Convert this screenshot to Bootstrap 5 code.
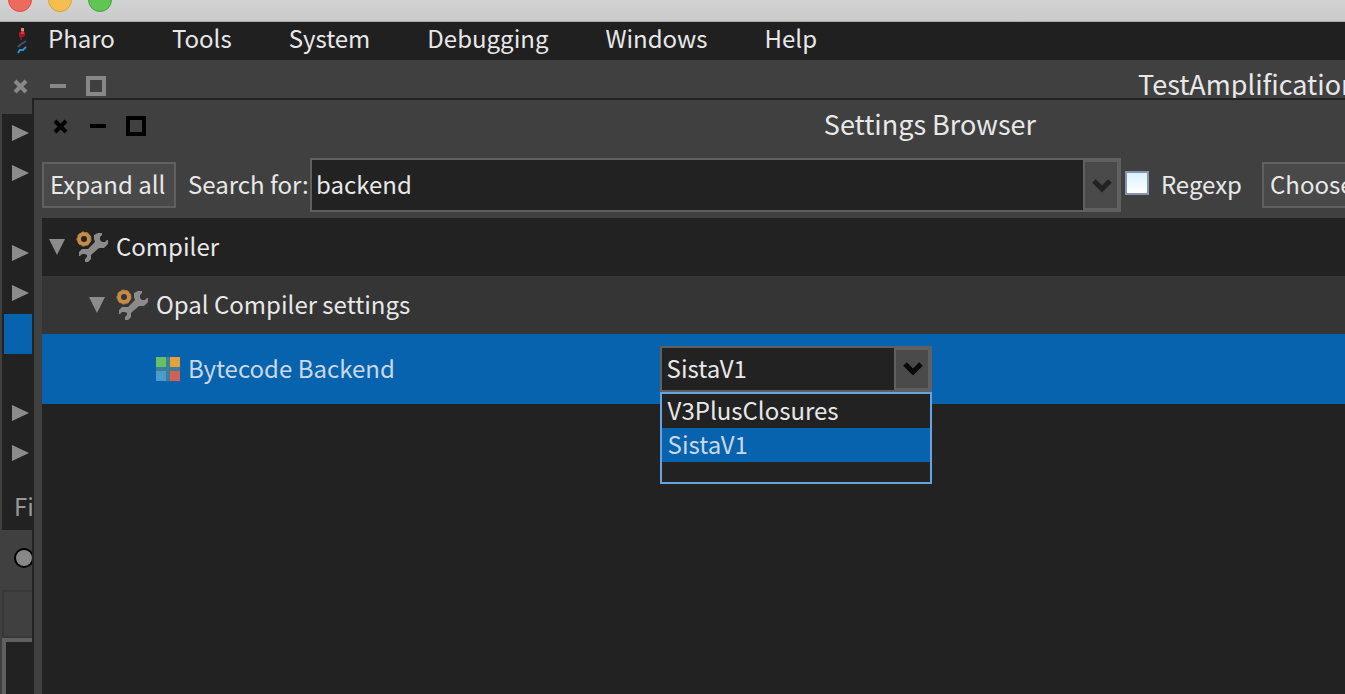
<!DOCTYPE html>
<html lang="en">
<head>
<meta charset="utf-8">
<meta name="viewport" content="width=device-width, initial-scale=1">
<title>Pharo - Settings Browser</title>
<link href="https://cdn.jsdelivr.net/npm/bootstrap@5.3.0/dist/css/bootstrap.min.css" rel="stylesheet">
<style>
  :root { --ink:#e8e8e8; --base:#404040; --dark:#222; --edge:#606060; --pick:#0763ae; }
  body { font-family:"Noto Sans CJK SC","Source Sans Pro",sans-serif; font-size:24px; line-height:36px; color:var(--ink); background:var(--base); overflow:hidden; }
  button, input, select { color:var(--ink); font:inherit; border-radius:0; }
  svg { display:block; flex:none; }
  .mac-bar { height:22px; background:linear-gradient(#d3d3d3,#cacaca); border-bottom:1px solid #aaa; padding-left:8px; gap:16px; }
  .light { width:24px; height:24px; border-radius:50%; border:1px solid; margin-top:-12px; }
  .light.close-dot { background:#ee6a5f; border-color:#d8504a; }
  .light.min-dot { background:#f5bf4f; border-color:#dba039; }
  .light.max-dot { background:#61c554; border-color:#42a63a; }
  .main-menu { height:38px; background:#202020; padding:0 0 6px 16px; gap:57px; }
  .main-menu a { color:var(--ink); text-decoration:none; }
  .first-item { gap:20px; }
  .first-item svg { margin-top:6px; }
  .win-btn { background:none; border:0; padding:0; display:block; color:#000; }
  .win-title { font-size:27px; }
  .back-title { height:54px; padding:0 0 2px 10px; }
  .back-title .win-btn { color:#888; }
  .back-title .win-title { width:207px; padding-bottom:4px; white-space:nowrap; }
  .side { width:32px; padding-left:2px; overflow:hidden; }
  .side-tree { background:var(--dark); height:416px; }
  .side-row { height:40px; padding:0 0 2px 10px; }
  .side-row.on { background:var(--pick); margin-left:2px; }
  .side-filter { color:#999; padding:14px 0 0 12px; white-space:nowrap; }
  .side-radio { height:60px; padding-left:12px; }
  .side-radio input { appearance:none; width:20px; height:20px; border:2px solid #000; border-radius:50%; background:#888; margin:0 0 4px; flex:none; }
  .side-tab { height:48px; border:2px solid #383838; border-right:0; }
  .side-text { height:80px; background:var(--dark); border:4px solid var(--edge); border-right:0; border-bottom:0; }
  .front { top:98px; left:32px; right:0; bottom:0; background:var(--base); border:solid var(--dark); border-width:2px 0 0 2px; padding-left:8px; }
  .front-title { height:58px; padding-bottom:6px; }
  .front-title .win-title { padding-bottom:4px; }
  .front-ctl { width:60%; padding-left:8px; }
  .ctl-gap { gap:18px; }
  .tools { height:54px; margin-bottom:6px; flex:none; }
  .tools label { padding-bottom:2px; white-space:nowrap; }
  .flat-btn { height:46px; background:#494949; border:2px solid var(--edge); padding:0 6px 2px; white-space:nowrap; line-height:40px; flex:none; }
  .expand { width:134px; }
  .choose { width:83px; border-right:0; overflow:hidden; margin-left:20px; }
  .search-label { width:134px; padding-left:12px; }
  .search { border:2px solid var(--edge); height:54px; min-width:0; }
  .search input { background:var(--dark); border:0; padding:0 4px 2px; outline:0; min-width:0; }
  .search button { width:36px; background:#4a4a4a; border:2px solid var(--edge); padding:0; flex:none; }
  .tick { appearance:none; width:24px; height:24px; border:2px solid #8794ae; background:linear-gradient(#daf2fd,#fff); margin:0 12px 5px 4px; flex:none; }
  .tree { background:var(--dark); }
  .tree-row { height:58px; padding-left:6px; }
  .tree-row span { padding-bottom:2px; }
  .tree-row .gear { margin:0 8px 0 10px; }
  .tree-row.alt { background:#353535; padding-left:46px; }
  .tree-row.on { height:70px; background:var(--pick); color:#cbd7e4; padding-left:0; }
  .name-col { width:47.4%; padding-left:114px; gap:8px; }
  .pick-box { width:272px; }
  .pick-box select { appearance:none; display:block; width:100%; height:46px; padding:0 40px 2px 5px; border:2px solid var(--edge); outline:0;
    background:var(--dark) url("data:image/svg+xml,%3Csvg xmlns='http://www.w3.org/2000/svg' width='36' height='42'%3E%3Cpath fill='%23606060' d='M0 0h36v42H0z'/%3E%3Cpath fill='%234a4a4a' d='M2 2h32v38H2z'/%3E%3Cpath d='M11 16l8 8 8-8' fill='none' stroke='%230a0a0a' stroke-width='5'/%3E%3C/svg%3E") right center no-repeat; }
  .pick-list { top:46px; left:0; width:100%; border:2px solid #66a3e0; background:var(--dark); padding-bottom:20px; z-index:5; }
  .pick-list button { display:block; width:100%; height:34px; line-height:32px; background:none; border:0; padding:0 6px 2px; text-align:left; }
  .pick-list button.on { background:var(--pick); color:#cbd7e4; }
</style>
</head>
<body class="vh-100 position-relative">
<svg width="0" height="0" class="position-absolute">
  <symbol id="tri-r" viewBox="0 0 18 18"><path d="M0 1l17 8-17 8z" fill="#8c8c8c"/></symbol>
  <symbol id="tri-d" viewBox="0 0 18 18"><path d="M1 1h16l-8 16z" fill="#8c8c8c"/></symbol>
  <symbol id="w-x" viewBox="0 0 20 20"><path d="M5 5l11 11M16 5L5 16" stroke="currentColor" stroke-width="4"/></symbol>
  <symbol id="w-min" viewBox="0 0 20 20"><path d="M2 8h16v4H2z" fill="currentColor"/></symbol>
  <symbol id="w-max" viewBox="0 0 20 20"><path d="M2 2h16v16H2z" fill="none" stroke="currentColor" stroke-width="4"/></symbol>
  <symbol id="gearwrench" viewBox="0 0 32 32">
    <path d="M18 4l4-2h4v2l-2 2v3l2 2h3l2-2h1v4l-4 4h-5l-8 7v4l-3 3H9v-3l2-2v-2l-2-1H6l-2 2H3v-4l3-3h6l7-7-1-3z" fill="#8b8b8b"/>
    <circle cx="8" cy="8" r="5" fill="none" stroke="#c58b48" stroke-width="4"/>
    <circle cx="8" cy="8" r="7" fill="none" stroke="#b9833f" stroke-width="1" stroke-dasharray="3 2"/>
  </symbol>
</svg>

<header>
  <div class="mac-bar d-flex"><span class="light close-dot"></span><span class="light min-dot"></span><span class="light max-dot"></span></div>
  <nav class="main-menu d-flex align-items-center">
    <div class="first-item d-flex align-items-center">
      <svg width="12" height="28" viewBox="0 0 12 28"><path d="M5 1h3v4H5z" fill="#d68a75"/><path d="M3 5h6v4l-2 1H3z" fill="#a81622"/><path d="M5 4h3v3H5z" fill="#d63a35"/><path d="M4 10h2v3H4z" fill="#5a2a35"/><path d="M10 14l-3 2-3 2-2 2" stroke="#4a4f70" stroke-width="2" fill="none"/><path d="M10 20l-3 3H4l-2 3" stroke="#2394d4" stroke-width="2" fill="none"/></svg>
      <a href="#">Pharo</a>
    </div>
    <a href="#">Tools</a><a href="#">System</a><a href="#">Debugging</a><a href="#">Windows</a><a href="#">Help</a>
  </nav>
</header>

<section>
  <div class="back-title d-flex align-items-center justify-content-between">
    <div class="d-flex align-items-center ctl-gap">
      <button class="win-btn" aria-label="Close"><svg width="20" height="20"><use href="#w-x"/></svg></button>
      <button class="win-btn" aria-label="Minimize"><svg width="20" height="20"><use href="#w-min"/></svg></button>
      <button class="win-btn" aria-label="Maximize"><svg width="20" height="20"><use href="#w-max"/></svg></button>
    </div>
    <span class="win-title">TestAmplification</span>
  </div>
  <div class="side">
    <div class="side-tree">
      <div class="side-row d-flex align-items-center"><svg width="18" height="18"><use href="#tri-r"/></svg></div>
      <div class="side-row d-flex align-items-center"><svg width="18" height="18"><use href="#tri-r"/></svg></div>
      <div class="side-row"></div>
      <div class="side-row d-flex align-items-center"><svg width="18" height="18"><use href="#tri-r"/></svg></div>
      <div class="side-row d-flex align-items-center"><svg width="18" height="18"><use href="#tri-r"/></svg></div>
      <div class="side-row on"></div>
      <div class="side-row"></div>
      <div class="side-row d-flex align-items-center"><svg width="18" height="18"><use href="#tri-r"/></svg></div>
      <div class="side-row d-flex align-items-center"><svg width="18" height="18"><use href="#tri-r"/></svg></div>
      <div class="side-filter">Fi</div>
    </div>
    <div class="side-radio d-flex align-items-center"><input type="radio" aria-label="Scope"></div>
    <div class="side-tab"></div>
    <div class="side-text"></div>
  </div>
</section>

<main class="front position-absolute d-flex flex-column">
  <div class="front-title d-flex align-items-center flex-shrink-0">
    <div class="front-ctl d-flex align-items-center ctl-gap">
      <button class="win-btn" aria-label="Close"><svg width="20" height="20"><use href="#w-x"/></svg></button>
      <button class="win-btn" aria-label="Minimize"><svg width="20" height="20"><use href="#w-min"/></svg></button>
      <button class="win-btn" aria-label="Maximize"><svg width="20" height="20"><use href="#w-max"/></svg></button>
    </div>
    <span class="win-title">Settings Browser</span>
  </div>
  <div class="tools d-flex align-items-center">
    <button class="flat-btn expand text-start">Expand all</button>
    <label for="q" class="search-label">Search for:</label>
    <div class="search d-flex flex-grow-1">
      <input id="q" type="text" value="backend" class="flex-grow-1">
      <button aria-label="Search history"><svg width="32" height="38"><path d="M9 15l8 8 8-8" fill="none" stroke="#222" stroke-width="5"/></svg></button>
    </div>
    <input type="checkbox" id="rx" class="tick"><label for="rx">Regexp</label>
    <button class="flat-btn choose text-start">Choose</button>
  </div>
  <div class="tree flex-grow-1">
    <div class="tree-row d-flex align-items-center"><svg width="18" height="18"><use href="#tri-d"/></svg><svg class="gear" width="32" height="32"><use href="#gearwrench"/></svg><span>Compiler</span></div>
    <div class="tree-row alt d-flex align-items-center"><svg width="18" height="18"><use href="#tri-d"/></svg><svg class="gear" width="32" height="32"><use href="#gearwrench"/></svg><span>Opal Compiler settings</span></div>
    <div class="tree-row on d-flex align-items-center">
      <label for="backend" class="name-col d-flex align-items-center"><svg width="24" height="24"><path d="M0 0h24v24H0z" fill="#397f98"/><path d="M0 0h10v10H0z" fill="#65c067"/><path d="M14 0h10v10H14z" fill="#e6a03a"/><path d="M0 14h10v10H0z" fill="#4b9bcc"/><path d="M14 14h10v10H14z" fill="#d46055"/></svg><span>Bytecode Backend</span></label>
      <div class="pick-box position-relative">
        <select id="backend"><option>V3PlusClosures</option><option selected>SistaV1</option></select>
        <div class="pick-list position-absolute"><button>V3PlusClosures</button><button class="on">SistaV1</button></div>
      </div>
    </div>
  </div>
</main>
<script src="https://cdn.jsdelivr.net/npm/bootstrap@5.3.0/dist/js/bootstrap.bundle.min.js"></script>
</body>
</html>
